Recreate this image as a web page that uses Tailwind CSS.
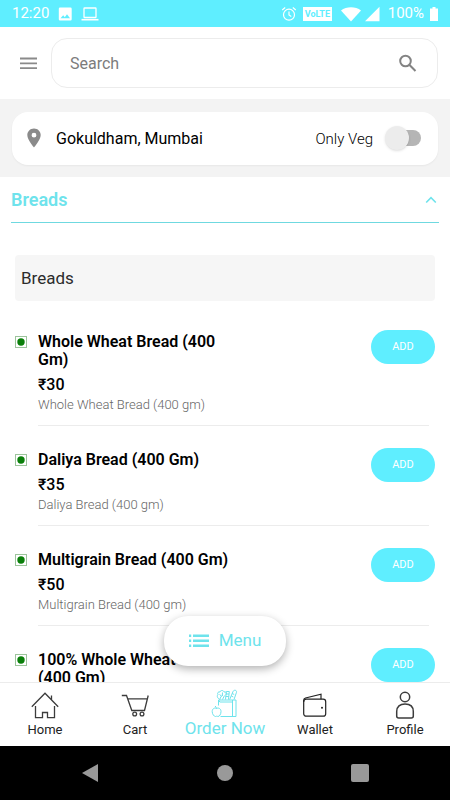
<!DOCTYPE html>
<html lang="en">

<head>
    <meta charset="UTF-8">
    <meta name="viewport" content="width=device-width, initial-scale=1.0">
    <title>Order Now - Breads</title>
    <script src="https://cdn.jsdelivr.net/npm/@tailwindcss/browser@4"></script>
</head>

<body class="h-screen flex flex-col bg-white text-black font-['Roboto',sans-serif]">
    <!-- Status bar -->
    <div class="shrink-0 h-[27px] pl-3 pr-3 flex items-center justify-between bg-[#5feeff] text-white">
        <div class="flex items-center">
            <span class="text-[15px]">12:20</span>
            <svg class="ml-2 size-4" viewBox="0 0 16 16" fill="currentColor">
                <path fill-rule="evenodd" d="M3 1.5h10.500a1.200 1.200 0 0 1 1.200 1.200v10.600a1.200 1.200 0 0 1-1.200 1.200H3a1.200 1.200 0 0 1-1.200-1.200V2.700A1.200 1.200 0 0 1 3 1.500zM3.500 12.200h9.500L10 8.300l-2.200 2.900-1.600-1.900z" />
            </svg>
            <svg class="ml-2 w-[18px] h-4" viewBox="0 0 18 16" fill="none" stroke="currentColor" stroke-width="1.300">
                <rect x="3" y="2" width="12" height="9.500" rx="0.600" />
                <path d="M.5 13.700h17" stroke-width="1.600" />
            </svg>
        </div>
        <div class="flex items-center">
            <svg class="size-4" viewBox="0 0 16 16" fill="none" stroke="currentColor" stroke-width="1.200">
                <circle cx="8" cy="8.700" r="5.500" />
                <path d="M8 5.500v3.500l2.300 1.500M1.200 4l3-2.500M14.800 4l-3-2.500" />
            </svg>
            <span class="ml-1.5 px-0.5 h-3.5 w-[29px] text-center bg-white text-[#5feeff] text-[9px] leading-[14px] font-bold">VoLTE</span>
            <svg class="ml-2 w-[22px] h-4" viewBox="0 0 22 16" fill="currentColor">
                <path d="M1 4.500C6.500.2 15.500.2 21 4.500L11 15.500z" />
            </svg>
            <svg class="ml-0.5 size-4" viewBox="0 0 16 16" fill="currentColor">
                <path d="M15.500.8v14.400H1z" />
            </svg>
            <span class="ml-2 text-[15px]">100%</span>
            <svg class="ml-1.5 w-2 h-4" viewBox="0 0 8 16" fill="currentColor">
                <path d="M2.500 1h3v1.500H8V15H0V2.500h2.500z" />
            </svg>
        </div>
    </div>

    <!-- Search -->
    <header class="shrink-0 h-[72px] pl-5 pr-3 flex items-center gap-3.5">
        <button aria-label="Open menu" class="shrink-0 text-[#8a8a8a]">
            <svg class="w-[17px] h-3.5" viewBox="0 0 17 14" fill="none" stroke="currentColor" stroke-width="1.800">
                <path d="M0 2.500h17M0 7.300h17M0 12.100h17" />
            </svg>
        </button>
        <div class="flex-1 flex items-center h-[50px] pl-[18px] pr-5 border border-[#ececec] rounded-2xl">
            <input type="search" aria-label="Search" placeholder="Search"
                class="flex-1 min-w-0 pt-0.5 text-base outline-none placeholder:text-[#7c7c7c]">
            <button aria-label="Submit search" class="text-[#838383]">
                <svg class="size-5" viewBox="0 0 20 20" fill="none" stroke="currentColor" stroke-width="2">
                    <circle cx="8.500" cy="8" r="5.300" />
                    <path d="M12.300 11.800l6.200 6.200" />
                </svg>
            </button>
        </div>
    </header>

    <!-- Location -->
    <section class="shrink-0 h-[78px] px-3 flex items-center bg-[#f3f3f3]">
        <div class="flex-1 h-[53px] pl-3.5 pr-[17px] flex items-center bg-white rounded-2xl shadow-xs">
            <svg class="w-4 h-5" viewBox="0 0 16 20" fill="#8a8a8a">
                <path fill-rule="evenodd" d="M8 .5C4.200.5 1.300 3.400 1.300 7.100 1.300 12 8 19.500 8 19.500s6.700-7.500 6.700-12.400C14.700 3.400 11.800.5 8 .5zm0 4.300a2.400 2.400 0 1 1 0 4.800 2.400 2.400 0 0 1 0-4.800z" />
            </svg>
            <span class="ml-3.5 pt-0.5 flex-1 text-base">Gokuldham, Mumbai</span>
            <label for="onlyVeg" class="mr-3.5 pt-0.5 text-[15px] font-light">Only Veg</label>
            <input type="checkbox" role="switch" id="onlyVeg"
                class="appearance-none relative w-[34px] h-4 rounded-full bg-[#b5b5b5] before:absolute before:-top-1 before:-left-0.5 before:size-6 before:rounded-full before:bg-[#ececec] before:shadow checked:before:left-3">
        </div>
    </section>

    <!-- Item list -->
    <main class="relative flex-1 min-h-0">
        <div class="h-full overflow-y-auto [scrollbar-width:none]">
            <button class="w-full px-[11px] block text-[#6ee3ec]">
                <span class="h-[46px] flex items-center justify-between pr-0.5 border-b border-[#6fd9e0]">
                    <span class="text-lg font-semibold">Breads</span>
                    <svg class="w-3 h-2" viewBox="0 0 12 8" fill="none" stroke="currentColor" stroke-width="1.600">
                        <path d="M1.200 6.500L6 1.700l4.800 4.800" />
                    </svg>
                </span>
            </button>

            <h2 class="mt-8 mx-[15px] h-[46px] px-1.5 pt-0.5 flex items-center bg-[#f6f6f6] rounded-sm text-[17px] text-[#2c2c2c]">Breads</h2>

            <ul class="mt-[7px] pl-[15px] pr-[15px]">
                <li class="flex">
                    <svg class="mt-7 mr-[11px] shrink-0 size-3" viewBox="0 0 12 12">
                        <rect x=".5" y=".5" width="11" height="11" fill="#fff" stroke="#9cc49c" />
                        <circle cx="6" cy="6" r="3.700" fill="#0a7f0a" />
                    </svg>
                    <div class="mr-1.5 flex-1 flex justify-between pt-[22px] pb-2.5 border-b border-[#ececec]">
                        <div class="w-[200px] pt-[3px]">
                            <h3 class="text-base leading-[18px] font-semibold">Whole Wheat Bread (400 Gm)</h3>
                            <p class="mt-1.5 text-base leading-5 font-medium">₹30</p>
                            <p class="text-[13px] leading-5 font-light text-[#666]">Whole Wheat Bread (400 gm)</p>
                        </div>
                        <button class="-mr-1.5 w-16 h-[34px] rounded-full bg-[#5feeff] text-white text-[11px]">ADD</button>
                    </div>
                </li>
                <li class="flex">
                    <svg class="mt-7 mr-[11px] shrink-0 size-3" viewBox="0 0 12 12">
                        <rect x=".5" y=".5" width="11" height="11" fill="#fff" stroke="#9cc49c" />
                        <circle cx="6" cy="6" r="3.700" fill="#0a7f0a" />
                    </svg>
                    <div class="mr-1.5 flex-1 flex justify-between pt-[22px] pb-2.5 border-b border-[#ececec]">
                        <div class="w-[200px] pt-[3px]">
                            <h3 class="text-base leading-[18px] font-semibold">Daliya Bread (400 Gm)</h3>
                            <p class="mt-1.5 text-base leading-5 font-medium">₹35</p>
                            <p class="text-[13px] leading-5 font-light text-[#666]">Daliya Bread (400 gm)</p>
                        </div>
                        <button class="-mr-1.5 w-16 h-[34px] rounded-full bg-[#5feeff] text-white text-[11px]">ADD</button>
                    </div>
                </li>
                <li class="flex">
                    <svg class="mt-7 mr-[11px] shrink-0 size-3" viewBox="0 0 12 12">
                        <rect x=".5" y=".5" width="11" height="11" fill="#fff" stroke="#9cc49c" />
                        <circle cx="6" cy="6" r="3.700" fill="#0a7f0a" />
                    </svg>
                    <div class="mr-1.5 flex-1 flex justify-between pt-[22px] pb-2.5 border-b border-[#ececec]">
                        <div class="w-[200px] pt-[3px]">
                            <h3 class="text-base leading-[18px] font-semibold">Multigrain Bread (400 Gm)</h3>
                            <p class="mt-1.5 text-base leading-5 font-medium">₹50</p>
                            <p class="text-[13px] leading-5 font-light text-[#666]">Multigrain Bread (400 gm)</p>
                        </div>
                        <button class="-mr-1.5 w-16 h-[34px] rounded-full bg-[#5feeff] text-white text-[11px]">ADD</button>
                    </div>
                </li>
                <li class="flex">
                    <svg class="mt-7 mr-[11px] shrink-0 size-3" viewBox="0 0 12 12">
                        <rect x=".5" y=".5" width="11" height="11" fill="#fff" stroke="#9cc49c" />
                        <circle cx="6" cy="6" r="3.700" fill="#0a7f0a" />
                    </svg>
                    <div class="mr-1.5 flex-1 flex justify-between pt-[22px] pb-2.5">
                        <div class="w-[200px] pt-[3px]">
                            <h3 class="text-base leading-[18px] font-semibold">100% Whole Wheat<br>(400 Gm)</h3>
                        </div>
                        <button class="-mr-1.5 w-16 h-[34px] rounded-full bg-[#5feeff] text-white text-[11px]">ADD</button>
                    </div>
                </li>
            </ul>
        </div>

        <!-- Floating menu button -->
        <button
            class="absolute bottom-4 left-1/2 -translate-x-1/2 w-[122px] h-[50px] flex items-center justify-center gap-2.5 rounded-3xl bg-white text-[#6ee3ec] text-[17px] shadow-[0_3px_8px_rgba(0,0,0,0.3)]">
            <svg class="w-5 h-3.5" viewBox="0 0 20 14" fill="currentColor">
                <path d="M0 .5h2.200V3H0zM4 .5h16V3H4zM0 5.500h2.200V8H0zM4 5.500h16V8H4zM0 10.500h2.200V13H0zM4 10.500h16V13H4z" />
            </svg>
            Menu
        </button>
    </main>

    <!-- Bottom tabs -->
    <nav class="relative shrink-0 h-16 grid grid-cols-5 border-t border-[#ececec] bg-white text-[13px] leading-4 text-[#222]">
        <a href="#" class="pt-2 flex flex-col items-center gap-[3px]">
            <svg class="size-7" viewBox="0 0 28 28" fill="none" stroke="#3c3c3c" stroke-width="1.300">
                <path d="M.8 15.700L14 2.200l13.200 13.500M20.500 8.700V4.500M4.500 15v11.700h7v-5.200h5v5.200h7V15" />
            </svg>
            Home
        </a>
        <a href="#" class="pt-2 flex flex-col items-center gap-[3px]">
            <svg class="size-7" viewBox="0 0 28 28" fill="none" stroke="#3c3c3c" stroke-width="1.300">
                <path d="M.8 4.500h4.700l5.300 15h12.700L27.200 4.500M6.500 7.800H26" />
                <circle cx="13.700" cy="23" r="1.900" />
                <circle cx="21" cy="23" r="1.900" />
            </svg>
            Cart
        </a>
        <a href="#" class="pt-1.5 flex flex-col items-center text-[17px] leading-5 text-[#6ee3ec] whitespace-nowrap">
            <svg class="w-7 h-[29px]" viewBox="0 0 28 29" fill="none" stroke="currentColor">
                <path d="M7.500 16.500V11H25v16.500H9.500M21.500 11v16.500M7.500 11l1.300 2h12.500" />
                <path d="M9 10.500C6.500 9.500 5.500 7 7 5.800 5.800 4 7.500 2.300 9 3c.5-2 3.500-2 4 0 2-.6 3.200 1.300 2 2.700M9 10.500c.2-2 1.200-3.500 3-4.500M8.500 5.500l2.200 1.700M11.500 3.500l-.2 3.200M14.500 10.500l.8-8h3l-.8 8M11.500 10.500l2-4M15 5h3M14.800 7.500h3" />
                <path d="M18.700 10.500l3.300-8c1-2 4-1.500 3.500.8L23 10.500M21.200 4.500l2 1M20.300 7l2 1" />
                <path d="M5.500 19.500c-2-1.200-4.300.2-4.300 3 0 2.600 1.800 5 3.300 5 .7 0 .6-.3 1.200-.3s.7.300 1.300.3c1.500 0 3-2.400 3-5 0-2.800-2.500-4.200-4.500-3zM5.500 19.500c-.2-1.200-.7-2-1.500-2.500" />
            </svg>
            Order Now
        </a>
        <a href="#" class="pt-2 flex flex-col items-center gap-[3px]">
            <svg class="size-7" viewBox="0 0 28 28" fill="none" stroke="#222" stroke-width="1.200">
                <rect x="2.700" y="8.200" width="22" height="17" rx="2.500" />
                <path d="M2.700 11V9.200c0-1.200.6-1.800 1.800-2.200L20 3.200v5" />
                <circle cx="21" cy="16.700" r="1" fill="#222" stroke="none" />
            </svg>
            Wallet
        </a>
        <a href="#" class="pt-2 flex flex-col items-center gap-[3px]">
            <svg class="size-7" viewBox="0 0 28 28" fill="none" stroke="#3c3c3c" stroke-width="1.500">
                <circle cx="14" cy="6" r="4.700" />
                <path d="M7.700 27h12.600c1.300 0 2-.7 2-2v-4.500C22.300 15.500 19 13 14 13s-8.300 2.500-8.300 7.500V25c0 1.300.7 2 2 2z" />
            </svg>
            Profile
        </a>
    </nav>

    <!-- System navigation -->
    <div class="shrink-0 h-[54px] px-[22px] grid grid-cols-3 items-center justify-items-center bg-black">
        <button aria-label="Back">
            <svg class="size-[18px]" viewBox="0 0 18 18" fill="#999">
                <path d="M17 0v18L1 9z" />
            </svg>
        </button>
        <button aria-label="Home screen" class="size-4 rounded-full bg-[#999]"></button>
        <button aria-label="Recent apps" class="size-[18px] rounded-xs bg-[#999]"></button>
    </div>
</body>

</html>
